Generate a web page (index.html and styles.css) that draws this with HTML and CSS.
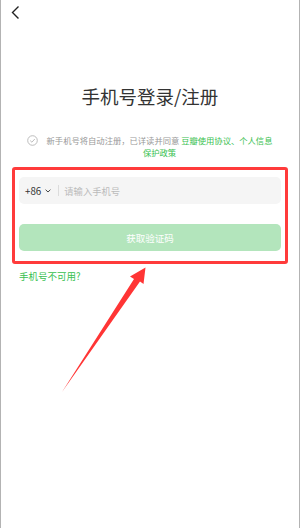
FILE: index.html
```html
<!DOCTYPE html>
<html lang="zh">
<head>
<meta charset="utf-8">
<title>手机号登录/注册</title>
<link rel="stylesheet" href="styles.css">
</head>
<body>
<div class="screen">
  <div class="topbar">
    <svg class="back" width="10" height="16" viewBox="0 0 10 16"><polyline points="7.5,1.5 1.5,7.5 7.5,13.5" fill="none" stroke="#222" stroke-width="1.4"/></svg>
  </div>
  <h1 class="title">手机号登录/注册</h1>
  <div class="agree">
    <svg class="check" width="11" height="11" viewBox="0 0 11 11"><circle cx="5.5" cy="5.5" r="4.8" fill="none" stroke="#b5b5b5" stroke-width="0.9"/><polyline points="3.2,5.6 4.9,7.2 7.8,4" fill="none" stroke="#b5b5b5" stroke-width="0.9"/></svg>
    <p class="agree-text">新手机号将自动注册，已详读并同意 <span class="green">豆瓣使用协议、个人信息</span><br><span class="green">保护政策</span></p>
  </div>
  <div class="form">
    <div class="phone-input">
      <span class="code">+86</span>
      <svg class="caret" width="6" height="4" viewBox="0 0 6 4"><polyline points="0.6,0.7 3,3 5.4,0.7" fill="none" stroke="#333" stroke-width="0.9"/></svg>
      <span class="divider"></span>
      <span class="placeholder">请输入手机号</span>
    </div>
    <button class="submit">获取验证码</button>
    <a class="alt-link">手机号不可用?</a>
  </div>
  <div class="highlight"></div>
  <svg class="arrow" width="300" height="528" viewBox="0 0 300 528"><polygon points="62,392 134,279 130,276.5 145.5,267.5 143.5,284 140,281.5" fill="#ff3535"/></svg>
  <span class="rail rail-left"></span>
  <span class="rail rail-right"></span>
</div>
</body>
</html>
```
FILE: styles.css
```css
html, body {
  margin: 0;
  padding: 0;
  background: #fff;
}
body {
  font-family: "Noto Sans CJK SC", "Noto Sans", sans-serif;
  color: #333;
}
.screen {
  position: relative;
  width: 300px;
  height: 528px;
  box-sizing: border-box;
  border-left: 1px solid #b3b3b3;
  border-right: 1px solid #b3b3b3;
  overflow: hidden;
  background: #fff;
}
.topbar {
  height: 24px;
  padding-left: 10px;
  padding-top: 5px;
  box-sizing: border-box;
}
.back {
  display: block;
}
.title {
  margin: 60px 0 0;
  font-size: 18.5px;
  font-weight: 400;
  line-height: 24px;
  text-align: center;
  color: #333;
}
.agree {
  display: flex;
  align-items: flex-start;
  margin-top: 26px;
  padding-left: 26px;
}
.check {
  display: block;
  margin-top: 1px;
}
.agree-text {
  margin: 0 0 0 7px;
  width: 229px;
  font-size: 8.3px;
  line-height: 12px;
  color: #999;
  text-align: center;
  white-space: nowrap;
}
.green {
  color: #38bf50;
}
.form {
  margin-top: 19px;
  padding: 0 18px;
  display: flex;
  flex-direction: column;
}
.phone-input {
  height: 27px;
  border-radius: 5px;
  background: #f5f5f5;
  display: flex;
  align-items: center;
  padding-left: 6px;
}
.code {
  font-size: 9.8px;
  color: #333;
  line-height: 12px;
}
.caret {
  display: block;
  margin-left: 4px;
}
.divider {
  width: 1px;
  height: 11px;
  background: #dcdcdc;
  margin-left: 7px;
}
.placeholder {
  margin-left: 5px;
  font-size: 9.3px;
  color: #bbb;
  line-height: 12px;
}
.submit {
  margin-top: 20px;
  height: 27px;
  border: none;
  border-radius: 5px;
  background: #b3e5bc;
  color: #fff;
  font-family: inherit;
  font-size: 9.5px;
  padding: 0;
}
.alt-link {
  margin-top: 18px;
  font-size: 9.5px;
  line-height: 14px;
  color: #38bf50;
}
.highlight {
  position: absolute;
  left: 11px;
  top: 167px;
  width: 276px;
  height: 97px;
  box-sizing: border-box;
  border: 3px solid #ff3b3b;
  border-radius: 3px;
}
.arrow {
  position: absolute;
  left: -1px;
  top: 0;
}
.rail {
  position: absolute;
  top: 22px;
  width: 1px;
  height: 23px;
  background: #8c8c8c;
}
.rail-left {
  left: -1px;
}
.rail-right {
  right: -1px;
}
```
